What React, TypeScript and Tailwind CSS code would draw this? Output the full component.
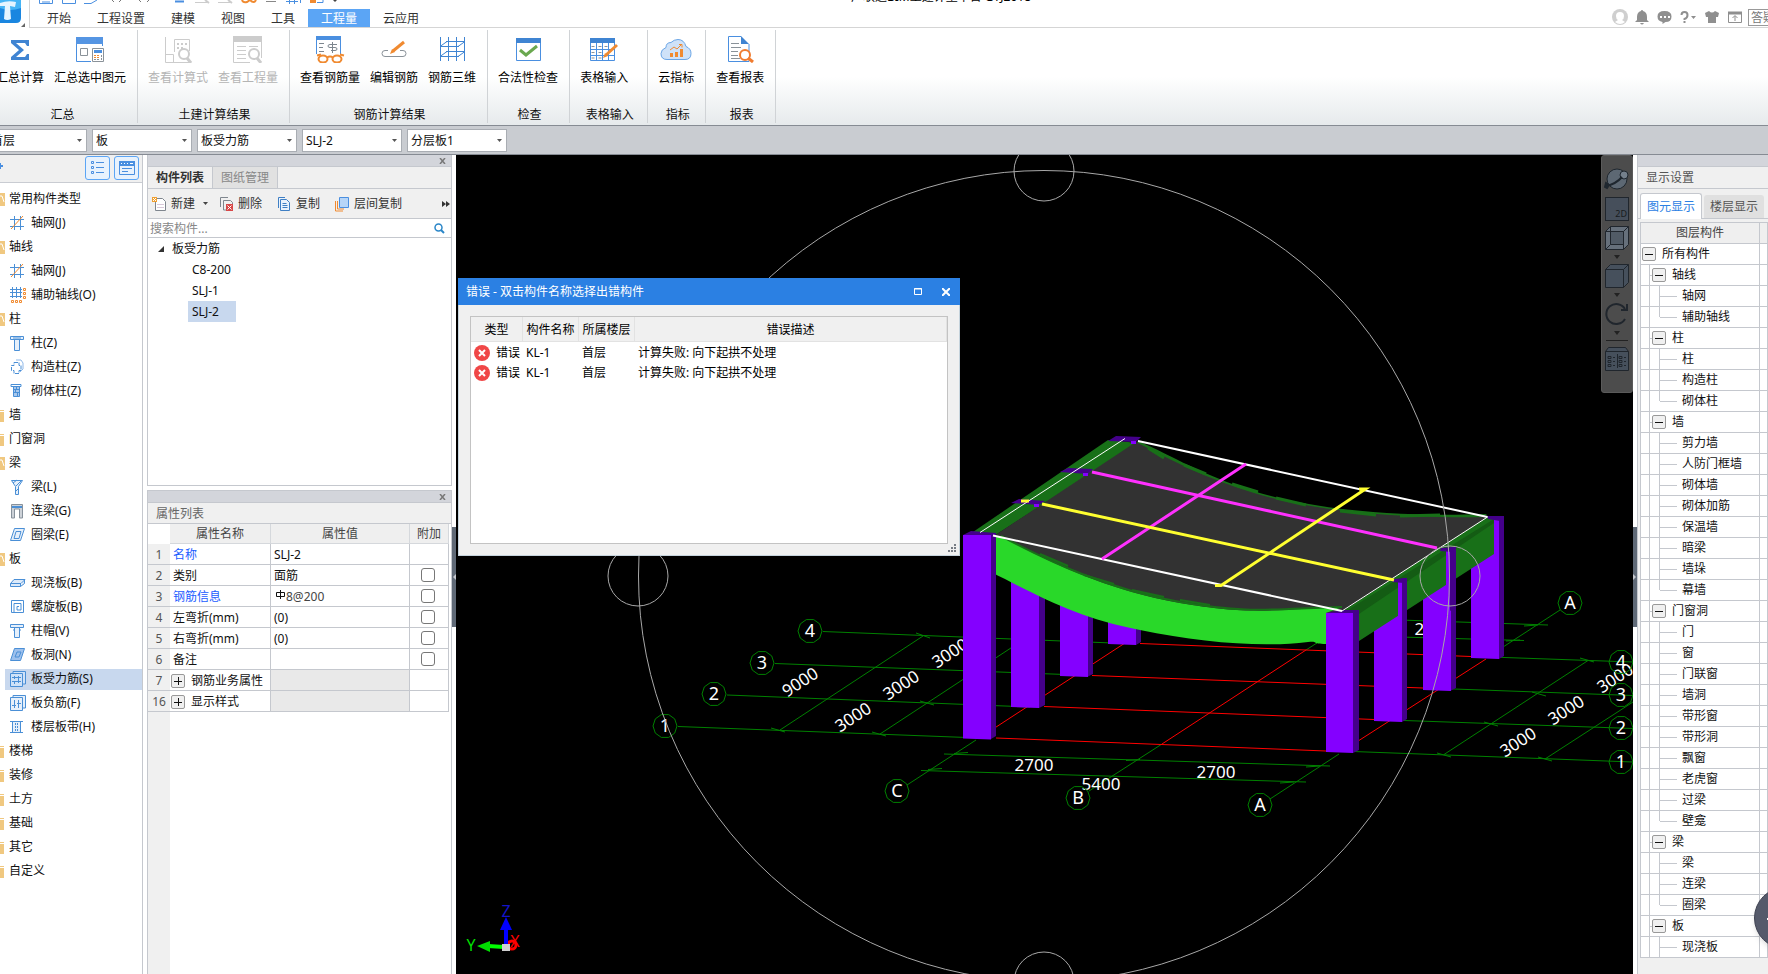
import React, { useState } from "react";

type IconProps = { name: string };

const BLUE = "#4a8fe0";
const ORANGE = "#f08a30";

// 32x28 icons of the ribbon
function RibbonIcon({ name }: IconProps) {
  return (
    <svg width="32" height="28" viewBox="0 0 32 28" fill="none" className="shrink-0">
      {name === "sum" && (
        <path d="M7 5h18v6h-2l-2-3h-9l8 7-8 7h9l2-3h2v6H7v-3l8-7-8-7z" fill="#3f84d2" />
      )}
      {name === "sumSel" && (
        <>
          <path d="M2.500 2v24.500H17M28.500 2v9" stroke={BLUE} />
          <path d="M2 2h27v7H2z" fill="#5595e3" />
          <path d="M6.500 13.500h7v7h-7z" stroke="#8a9299" />
          <path d="M18.500 13.500h11v13h-11z" stroke="#8a9299" fill="#fff" />
          <path d="M20 15h8v3h-8z" fill={BLUE} />
          <path d="M20 20h2v1h-2zM23 20h2v1h-2zM20 22h2v1h-2zM23 22h2v1h-2z" fill={ORANGE} />
          <path d="M27 20h1v2h-1zM27 23h1v2h-1zM20 24h2v1h-2zM23 24h2v1h-2z" fill="#8a9299" />
        </>
      )}
      {name === "formula" && (
        <>
          <path d="M3.500 2v25.500H29M3.500 19.500h8v8M12.500 17V4.500h15V16" stroke="#ccc" />
          <path d="M15 8h2v2h-2zM19 8h2v2h-2zM23 8h2v2h-2zM15 12h2v2h-2zM19 12h2v2h-2z" fill="#ccc" />
          <circle cx="22" cy="19" r="5" stroke="#ccc" strokeWidth="2" fill="#fff" />
          <path d="M25 23l4 5" stroke="#ccc" strokeWidth="3" />
        </>
      )}
      {name === "quantity" && (
        <>
          <path d="M1.500 2v25.500H18M29.500 2v21" stroke="#ccc" />
          <path d="M1 1h29v6H1z" fill="#ccc" />
          <path d="M5 11.500h9M5 15.500h9M5 19.500h9M5 23.500h9M17 11.500h9" stroke="#ccc" />
          <circle cx="22" cy="19" r="5" stroke="#ccc" strokeWidth="2" fill="#fff" />
          <path d="M25 23l4 5" stroke="#ccc" strokeWidth="3" />
        </>
      )}
      {name === "rebar" && (
        <>
          <path d="M2.500 2v17M26.500 2v17" stroke={BLUE} />
          <path d="M2 1h25v4H2z" fill={BLUE} />
          <path d="M5 8.500h5M5 12.500h4M5 16.500h5" stroke="#7d868e" />
          <path d="M18.500 7v11M23 9.500h-7q-2 0-2 1.500t2 1.500h5q2 0 2 1.500t-2 1.500h-4" stroke="#7d868e" />
          <path d="M3 20.500l4-1M30 20.500l-4-1M13 22.500q3-2 6 0" stroke={ORANGE} strokeWidth="2" />
          <ellipse cx="9" cy="24" rx="4.500" ry="3.500" stroke={ORANGE} strokeWidth="2" fill="#fff" />
          <ellipse cx="23" cy="24" rx="4.500" ry="3.500" stroke={ORANGE} strokeWidth="2" fill="#fff" />
        </>
      )}
      {name === "edit" && (
        <>
          <path d="M10 15.500H7q-3 0-3 3t3 3h18q3 0 3-3t-3-3h-3" stroke="#8a9299" />
          <path d="M12 19l2-5 3 3z" fill={ORANGE} />
          <path d="M15 16L26 7" stroke={ORANGE} strokeWidth="3" />
        </>
      )}
      {name === "rebar3d" && (
        <path
          d="M4.500 2v24M12.500 2v24M20.500 2v24M28.500 2v24M10 6.500h19M4 11.500h19M10 16.500h19M4 21.500h19M4 11.500l7-5M4 21.500l7-5M22 11.500l7-5M22 21.500l7-5"
          stroke="#3f84d2"
        />
      )}
      {name === "check" && (
        <>
          <path d="M4.500 3.500h24v22h-24z" stroke={BLUE} />
          <path d="M4 3h25v5H4z" fill="#3f84d2" />
          <path d="M8 15l6 5 11-9" stroke="#6aa84f" strokeWidth="3" />
        </>
      )}
      {name === "table" && (
        <>
          <path d="M2.500 3.500h24v22h-24z" stroke={BLUE} />
          <path d="M2 3h25v5H2z" fill="#3f84d2" />
          <path d="M2 14.500h24M2 20.500h24M8.500 8v17M14.500 8v17M20.500 8v17" stroke={BLUE} />
          <path d="M3.500 11.500h3M10.500 11.500h3M16.500 11.500h3M3.500 17.500h3M10.500 17.500h3M3.500 23h3M10.500 23h3" stroke="#8a9299" />
          <path d="M15 23l2-5 3 3z" fill={ORANGE} />
          <path d="M18 20L29 10" stroke={ORANGE} strokeWidth="3" />
        </>
      )}
      {name === "cloud" && (
        <>
          <path
            d="M7 24.500q-6 0-6-6 0-4 5-6 0-5 5-5 3-3 7-3 6 0 8 7 5 2 5 7 0 6-6 6z"
            fill="#cfe2f8"
            stroke="#6aa5e6"
          />
          <path d="M10 18h3v4h-3zM15 17h3v5h-3zM20 14h3v8h-3z" fill={ORANGE} />
          <path d="M10 15l4-3 3 2 5-5M19 9.500h3v3" stroke={ORANGE} />
        </>
      )}
      {name === "report" && (
        <>
          <path d="M17 1.500H4.500v25H25V9" stroke={BLUE} fill="#fff" />
          <path d="M17 1v8h8z" fill="#3f84d2" />
          <path d="M7 8.500h8M7 12.500h10M7 16.500h7M7 20.500h7M7 23.500h9" stroke="#8a9299" />
          <circle cx="21" cy="20" r="5" stroke="#f07c30" strokeWidth="2" fill="#fff" />
          <path d="M24 23l5 4" stroke="#f07c30" strokeWidth="3" />
        </>
      )}
    </svg>
  );
}

// 16x16 icons of the component tree
function TreeIcon({ name }: IconProps) {
  const s = "#4a8fd6";
  return (
    <svg width="16" height="16" viewBox="0 0 16 16" fill="none" stroke={s} className="shrink-0">
      {name === "grid" && (
        <>
          <path d="M4.500 1v14M10.500 1v14M0 4.500h14M0 11.500h14" />
          <path d="M1 14L13 1" stroke={ORANGE} />
        </>
      )}
      {name === "gridAux" && (
        <>
          <path d="M2.500 0v11M6.500 0v11M10.500 0v11M0 2.500h12M0 5.500h12M0 9.500h12" />
          <path d="M13.500 1.500h2v2h-2zM13.500 5.500h2v2h-2zM13.500 9.500h2v2h-2zM1.500 13.500h2v2h-2zM5.500 13.500h2v2h-2zM9.500 13.500h2v2h-2z" stroke={ORANGE} />
        </>
      )}
      {name === "column" && <path d="M.5 1.500h13v3h-13zM4.500 4.500v11h5v-11M3 3h8" fill="#e6f0fb" />}
      {name === "cap" && <path d="M.5 1.500h13v3h-13zM4.500 5v9.500h5V5M3 7h1M10 7h1" fill="#e6f0fb" />}
      {name === "structCol" && (
        <>
          <path d="M6 1h5l2 3v6l-3 3" stroke="#8fb8e8" />
          <path d="M4 3.500h5v3h2v5H9v3H4v-3H1.500v-5H4z" fill="#fff" strokeDasharray="4 1" />
        </>
      )}
      {name === "brickCol" && (
        <>
          <path d="M1 1.500h10v2H1z" />
          <path d="M3.500 3.500h6v10h-6zM3 6.500h6M3 9.500h6M6.500 4v2M5.500 7v2M7.500 10v3" fill="#a9c8ec" />
        </>
      )}
      {name === "beam" && <path d="M1.500 1.500h11l-4 6v8h-3v-8zM3 4l4-3M6 7l5-5M6 12l3-3" fill="#e6f0fb" />}
      {name === "linkBeam" && (
        <>
          <path d="M1.500 15V1.500h11V15h-3V6h-5v9z" stroke="#87919b" fill="#cdd2d8" />
          <path d="M2 4h10" strokeWidth="2" />
        </>
      )}
      {name === "ringBeam" && <path d="M4.500 1.500h10l-4 12H.5zM6 4.500h5l-2 7H4z" fill="#e6f0fb" />}
      {name === "slab" && <path d="M4 4.500h11l-4 4H.5zM.5 8.500v3h10v-3M10.500 11.500l4-3v-4" fill="#dceafa" />}
      {name === "spiral" && <path d="M1.500 1.500h12v12h-12zM4 13V4.500h7v6.500H7V7.500h2" />}
      {name === "hole" && <path d="M4.500 1.500h10l-4 12H.5zM7 5h4l-2 5H5z" fill="#9dc0ec" />}
      {name === "rebarS" && <path d="M3 3V.5h12.500V13H13M.5 2.500h12v13H.5zM2 6.500h9M2 10.500h9M4.500 5v3M8.500 5v7M4.500 10v3" fill="#cfe2f8" />}
      {name === "rebarF" && <path d="M3 3V.5h12.500V13H13M.5 2.500h12v13H.5zM4.500 5v8M8.500 5v8M2 10.500h4M7 8.500h4" fill="#e6f0fb" />}
      {name === "band" && (
        <>
          <path d="M2 3h9v10H2z" fill="#e6f0fb" stroke="none" />
          <path d="M0 2.500h13M0 13.500h13M2.500 3v10M10.500 3v10" />
          <path d="M5.500 4v9M7.500 4v9" strokeDasharray="2 1" />
        </>
      )}
    </svg>
  );
}

const tabs = ["开始", "工程设置", "建模", "视图", "工具", "工程量", "云应用"];

const ribbon = [
  { title: "汇总", buttons: [["sum", "汇总计算"], ["sumSel", "汇总选中图元"]] },
  { title: "土建计算结果", disabled: true, buttons: [["formula", "查看计算式"], ["quantity", "查看工程量"]] },
  { title: "钢筋计算结果", buttons: [["rebar", "查看钢筋量"], ["edit", "编辑钢筋"], ["rebar3d", "钢筋三维"]] },
  { title: "检查", buttons: [["check", "合法性检查"]] },
  { title: "表格输入", wide: true, buttons: [["table", "表格输入"]] },
  { title: "指标", buttons: [["cloud", "云指标"]] },
  { title: "报表", buttons: [["report", "查看报表"]] },
];

const selects = [
  ["楼层", "首层"],
  ["构件大类", "板"],
  ["构件类型", "板受力筋"],
  ["构件", "SLJ-2"],
  ["分层", "分层板1"],
];

// [label, icon]; groups use "open" or "closed"
const navItems = [
  ["常用构件类型", "open"],
  ["轴网(J)", "grid"],
  ["轴线", "open"],
  ["轴网(J)", "grid"],
  ["辅助轴线(O)", "gridAux"],
  ["柱", "open"],
  ["柱(Z)", "column"],
  ["构造柱(Z)", "structCol"],
  ["砌体柱(Z)", "brickCol"],
  ["墙", "closed"],
  ["门窗洞", "closed"],
  ["梁", "open"],
  ["梁(L)", "beam"],
  ["连梁(G)", "linkBeam"],
  ["圈梁(E)", "ringBeam"],
  ["板", "open"],
  ["现浇板(B)", "slab"],
  ["螺旋板(B)", "spiral"],
  ["柱帽(V)", "cap"],
  ["板洞(N)", "hole"],
  ["板受力筋(S)", "rebarS"],
  ["板负筋(F)", "rebarF"],
  ["楼层板带(H)", "band"],
  ["楼梯", "closed"],
  ["装修", "closed"],
  ["土方", "closed"],
  ["基础", "closed"],
  ["其它", "closed"],
  ["自定义", "closed"],
];

const properties = [
  { no: 1, name: "名称", value: "SLJ-2", link: true },
  { no: 2, name: "类别", value: "面筋", check: true },
  { no: 3, name: "钢筋信息", value: "8@200", link: true, check: true, grade: true },
  { no: 4, name: "左弯折(mm)", value: "(0)", check: true },
  { no: 5, name: "右弯折(mm)", value: "(0)", check: true },
  { no: 6, name: "备注", value: "", check: true },
  { no: 7, name: "钢筋业务属性", value: "", group: true },
  { no: 16, name: "显示样式", value: "", group: true },
];

const layers = [
  { name: "轴线", items: ["轴网", "辅助轴线"] },
  { name: "柱", items: ["柱", "构造柱", "砌体柱"] },
  { name: "墙", items: ["剪力墙", "人防门框墙", "砌体墙", "砌体加筋", "保温墙", "暗梁", "墙垛", "幕墙"] },
  { name: "门窗洞", items: ["门", "窗", "门联窗", "墙洞", "带形窗", "带形洞", "飘窗", "老虎窗", "过梁", "壁龛"] },
  { name: "梁", items: ["梁", "连梁", "圈梁"] },
  { name: "板", items: ["现浇板"], more: true },
];

function TitleBar() {
  return (
    <div className="relative flex h-[9px] items-start overflow-hidden pl-[39px]">
      <svg width="310" height="4" viewBox="0 0 310 4" fill="none">
        <path d="M.5 0v3.500h13V0M3 2h8M23.500 0v3.500h13V0M45 3.500h7l6-3.500" stroke={BLUE} />
        <path d="M73 0l2 2M82 0l-2 2M100 0l2 2M110 0l-2 2" stroke="#777" />
        <path d="M136 1.500h9" stroke={BLUE} strokeWidth="2" />
        <path d="M156 2.500h12M179 2.500h12" stroke="#ccc" />
        <path d="M166 0l4 3M189 0l4 3" stroke="#ccc" strokeWidth="2" />
        <path d="M203 0q1 3 5 2l3-2q4 4 6 0" stroke={ORANGE} strokeWidth="2" />
        <path d="M227 1.500h10" stroke="#888" />
        <path d="M247 1.500h12M250.500 0v4M255.500 0v4M261.500 0v3" stroke={BLUE} />
        <path d="M271 0h6v3h-6z" fill={ORANGE} />
        <path d="M278 2.500h6V0" stroke={BLUE} />
        <path d="M294 0h4l-2 2z" fill="#444" />
      </svg>
      <span className="absolute top-[-11px] left-[851px] leading-4 whitespace-nowrap text-black">
        广联达BIM土建计量平台 GTJ2018
      </span>
    </div>
  );
}

function TabBar() {
  const [active, setActive] = useState("工程量");
  return (
    <div className="flex h-[19px] border-b border-[#d5d5d5] pl-[34px]">
      {tabs.map((t) => (
        <button
          key={t}
          onClick={() => setActive(t)}
          className={`h-[18px] px-[13px] pt-px leading-4 ${active === t ? "bg-[#5ba5f5] text-white" : "text-[#333]"}`}
        >
          {t}
        </button>
      ))}
      <div className="ml-auto flex items-start text-[#8f8f8f]">
        <button aria-label="用户" className="mr-[7px]">
          <svg width="16" height="16" viewBox="0 0 16 16">
            <circle cx="8" cy="8" r="8" fill="#cfcfcf" />
            <path d="M8 3q4 0 4 4 0 3-2 4l3 2q-5 4-10 0l3-2Q4 10 4 7q0-4 4-4z" fill="#fff" />
          </svg>
        </button>
        <button aria-label="通知" className="mr-2">
          <svg width="14" height="16" viewBox="0 0 14 16" fill="currentColor">
            <path d="M7 1q1 0 1 1 4 1 4 6v3l2 2H0l2-2V8q0-5 4-6 0-1 1-1zM5 14h4q-2 3-4 0z" />
          </svg>
        </button>
        <button aria-label="消息" className="mr-2">
          <svg width="15" height="16" viewBox="0 0 15 16" fill="currentColor">
            <path d="M7.500 2q7 0 7 5.500t-6 5.500l-3 2v-2Q.5 12 .5 7.500.5 2 7.500 2z" />
            <path d="M3 7h2v2H3zM7 7h2v2H7zM11 7h2v2h-2z" fill="#fff" />
          </svg>
        </button>
        <button aria-label="帮助" className="mr-2">
          <svg width="17" height="16" viewBox="0 0 17 16" fill="none">
            <path d="M1.500 6q0-3 3-3t3 3-3 4v1" stroke="currentColor" strokeWidth="2" />
            <path d="M3.500 12h2v2h-2zM11 7h5l-2.500 3z" fill="currentColor" />
          </svg>
        </button>
        <button aria-label="皮肤" className="mr-[9px]">
          <svg width="14" height="16" viewBox="0 0 14 16" fill="currentColor">
            <path d="M4 2q3 3 6 0l4 2-1 4h-2v6H3V8H1L0 4z" />
          </svg>
        </button>
        <button aria-label="收起功能区" className="mr-1.5">
          <svg width="14" height="16" viewBox="0 0 14 16" fill="none" stroke="currentColor">
            <path d="M.5 3.500h13v10H.5zM7 12V7M4.500 9L7 6.500 9.500 9" />
            <path d="M0 4h14" strokeWidth="3" />
          </svg>
        </button>
        <button className="h-[17px] w-5 overflow-hidden border border-r-0 border-[#999] pl-0.5 text-left leading-4 whitespace-nowrap text-[#777]">
          答疑
        </button>
      </div>
    </div>
  );
}

function Ribbon() {
  return (
    <div className="flex h-[98px] border-b border-[#868b93] bg-linear-to-b from-white from-50% to-[#e6eaec] pt-0.5 pb-0.5">
      {ribbon.map((g, i) => (
        <div
          key={g.title}
          className={`flex shrink-0 flex-col justify-between border-r border-[#d0d3d6] pl-[5px] ${i === 0 ? "-ml-[14px]" : ""} ${g.wide ? "pr-[14px]" : "pr-1.5"}`}
        >
          <div className="flex">
            {g.buttons.map(([icon, label]) => (
              <button
                key={label}
                disabled={g.disabled}
                className={`flex flex-col items-center gap-1.5 px-[5px] pt-[5px] leading-[18px] whitespace-nowrap ${g.disabled ? "text-[#b4b4b4]" : "text-black"}`}
              >
                <RibbonIcon name={icon} />
                {label}
              </button>
            ))}
          </div>
          <div className={`pl-[3px] text-center leading-4 text-[#111] ${g.wide ? "-mr-2" : ""}`}>{g.title}</div>
        </div>
      ))}
    </div>
  );
}

function SelectBar() {
  return (
    <div className="flex h-[29px] items-center gap-[5px] border-b border-[#868b93] bg-[#c9ccd1]">
      {selects.map(([label, value], i) => (
        <div key={label} className={`relative h-[23px] w-[100px] ${i === 0 ? "-ml-[13px]" : ""}`}>
          <select
            aria-label={label}
            className="h-full w-full appearance-none border border-[#a9adb3] bg-white pt-px pl-[3px] text-[#111]"
          >
            <option>{value}</option>
          </select>
          <svg width="5" height="3" className="pointer-events-none absolute top-[10px] right-[5px]">
            <path d="M0 0h5L2.500 3z" fill="#555" />
          </svg>
        </div>
      ))}
    </div>
  );
}

function Sidebar() {
  const [selected, setSelected] = useState(20);
  return (
    <aside className="w-[143px] shrink-0 border-r border-[#c5c8ce]">
      <div className="flex h-7 items-start border-b border-[#c9ccd2] bg-[#f0f0f0] pt-px">
        <svg width="4" height="22" className="mr-auto">
          <path d="M0 10h3M0 7v6" stroke={BLUE} strokeWidth="2" />
        </svg>
        <button aria-label="列表视图" className="mr-1 flex h-6 w-[25px] items-center justify-center rounded-[3px] border border-[#5ba5f5] bg-[#e8f2fd]">
          <svg width="14" height="14" viewBox="0 0 14 14" fill="none" stroke={BLUE}>
            <path d="M.5.500h2v2h-2zM.5 5.500h2v2h-2zM.5 10.500h2v2h-2zM5 1.500h8M5 6.500h8M5 11.500h8" />
          </svg>
        </button>
        <button aria-label="面板视图" className="mr-[3px] flex h-6 w-[25px] items-center justify-center rounded-[3px] border border-[#5ba5f5] bg-[#e8f2fd]">
          <svg width="16" height="14" viewBox="0 0 16 14" fill="none">
            <path d="M.5.500h15v13H.5zM3 7.500h10M3 10.500h6" stroke={BLUE} />
            <path d="M0 0h16v5H0z" fill={BLUE} />
            <path d="M2 2.500h1M5 2.500h1M8 2.500h1M11 2.500h3" stroke="#fff" />
          </svg>
        </button>
      </div>
      <ul className="pt-1">
        {navItems.map(([label, icon], i) => {
          const isGroup = icon === "open" || icon === "closed";
          return (
            <li key={i} className="flex h-6 items-center">
              {isGroup ? (
                <button className="flex items-center gap-1 leading-5 text-[#111]">
                  <svg width="5" height="13" viewBox="0 0 5 13">
                    <path d={icon === "open" ? "M0 0h5v13H0z" : "M0 1h4v12H0z"} fill="#f0c880" />
                    <path d={icon === "open" ? "M0 3h2l2 6" : "M0 2.500h4"} stroke="#fff" fill="none" />
                  </svg>
                  {label}
                </button>
              ) : (
                <button
                  onClick={() => setSelected(i)}
                  className={`ml-[5px] flex h-[21px] flex-1 items-center gap-[5px] pl-[5px] leading-5 text-[#111] ${selected === i ? "bg-[#c8d8ee]" : ""}`}
                >
                  <TreeIcon name={icon} />
                  {label}
                </button>
              )}
            </li>
          );
        })}
      </ul>
    </aside>
  );
}

function PanelGrip() {
  return (
    <div className="flex h-3 items-center justify-end border-b border-[#c5c8ce] bg-[#d3d5db] pr-[5px]">
      <button aria-label="关闭面板">
        <svg width="7" height="6" viewBox="0 0 7 6" className="block">
          <path d="M1 0l5 6M6 0L1 6" stroke="#777" strokeWidth="1.500" />
        </svg>
      </button>
    </div>
  );
}

function ComponentList() {
  return (
    <section className="flex h-[331px] shrink-0 flex-col border-x border-b border-[#c5c8ce]">
      <PanelGrip />
      <div className="flex h-[22px] border-b border-[#c5c8ce] bg-[#f0f0f0]">
        <button className="border-r border-[#c5c8ce] px-2 font-bold text-[#333]">构件列表</button>
        <button className="border-r border-[#c5c8ce] bg-[#e1e1e1] px-2 text-[#888]">图纸管理</button>
      </div>
      <div className="flex h-[30px] items-center border-b border-[#c5c8ce] bg-[#f0f0f0] pl-1 text-[#333]">
        <button className="flex items-center gap-1">
          <svg width="15" height="16" viewBox="0 0 15 16" fill="none">
            <path d="M3.500 2.500h7l3 3v9h-10z" stroke="#7f868e" fill="#fff" />
            <path d="M5 8.500h7M5 11.500h7" stroke="#d8c8d8" />
            <path d="M0 1h5v5H0z" fill="#f0a030" />
            <path d="M1 2l3 3M4 2L1 5" stroke="#fff" />
          </svg>
          新建
        </button>
        <svg width="5" height="3" className="mr-[11px] ml-2">
          <path d="M0 0h5L2.500 3z" fill="#444" />
        </svg>
        <button className="mr-4 flex items-center gap-1">
          <svg width="15" height="16" viewBox="0 0 15 16" fill="none">
            <path d="M1.500 11V1.500H9M4.500 14V4.500h7l2 2v7.500z" stroke="#7f868e" />
            <path d="M7 8h7v7H7z" fill="#d84848" />
            <path d="M8.500 9.500l4 4M12.500 9.500l-4 4" stroke="#fff" />
          </svg>
          删除
        </button>
        <button className="mr-[15px] flex items-center gap-1.5">
          <svg width="12" height="16" viewBox="0 0 12 16" fill="none" stroke="#3f7fc4">
            <path d="M.5 12V1.500H7M2.500 3.500h6l3 3v8h-9z" fill="#eaf3fd" />
            <path d="M4.500 7.500h4M4.500 9.500h5M4.500 11.500h5" />
          </svg>
          复制
        </button>
        <button className="flex items-center gap-1">
          <svg width="15" height="16" viewBox="0 0 15 16" fill="none">
            <path d="M.5 5v10H8M2.500 5v8H9" stroke={ORANGE} />
            <path d="M4.500 1.500h9v10h-9z" fill="#b7d5f7" stroke={BLUE} />
          </svg>
          层间复制
        </button>
        <button aria-label="更多" className="mr-px ml-auto">
          <svg width="8" height="6" viewBox="0 0 8 6">
            <path d="M0 0l4 3-4 3zM4 0l4 3-4 3z" fill="#333" />
          </svg>
        </button>
      </div>
      <div className="flex h-[19px] items-center border-b border-[#c5c8ce] pr-1.5">
        <input
          aria-label="搜索构件"
          placeholder="搜索构件..."
          className="min-w-0 flex-1 pt-px pl-0.5 outline-none placeholder:text-[#888]"
        />
        <svg width="11" height="11" viewBox="0 0 11 11" fill="none" stroke="#2a86c8">
          <circle cx="4.500" cy="4.500" r="3.500" strokeWidth="1.500" />
          <path d="M7 7l3 3" strokeWidth="2" />
        </svg>
      </div>
      <div className="flex flex-col items-start text-[#111]">
        <button className="flex h-[21px] items-center gap-2 pl-2.5">
          <svg width="6" height="6">
            <path d="M6 0v6H0z" fill="#333" />
          </svg>
          板受力筋
        </button>
        <button className="ml-10 h-[21px] w-12 pl-1 text-left">C8-200</button>
        <button className="ml-10 h-[21px] w-12 pl-1 text-left">SLJ-1</button>
        <button className="ml-10 h-[21px] w-12 bg-[#c8d8ee] pl-1 text-left">SLJ-2</button>
      </div>
    </section>
  );
}

function PropertyList() {
  return (
    <section className="mt-1 flex flex-1 flex-col border-x border-t border-[#c5c8ce]">
      <PanelGrip />
      <h2 className="h-[21px] border-b border-[#c5c8ce] bg-[#f0f0f0] pl-2 leading-[22px] text-[#666]">属性列表</h2>
      <table className="w-[301px] table-fixed border-separate border-spacing-0 text-[#111]">
        <colgroup>
          <col className="w-[22px]" />
          <col className="w-[101px]" />
          <col className="w-[139px]" />
          <col className="w-[39px]" />
        </colgroup>
        <thead>
          <tr className="text-[#444]">
            <td className="h-5" />
            <th className="h-5 border-r border-b border-[#d5d8dc] bg-[#efefef] p-0 pt-px leading-4 font-normal">属性名称</th>
            <th className="h-5 border-r border-b border-[#d5d8dc] bg-[#efefef] p-0 pt-px leading-4 font-normal">属性值</th>
            <th className="h-5 border-r border-b border-[#d5d8dc] bg-[#efefef] p-0 pt-px leading-4 font-normal">附加</th>
          </tr>
        </thead>
        <tbody>
          {properties.map((p) => (
            <tr key={p.no}>
              <td className="h-[21px] border-b border-[#c5c8ce] bg-[#f0f0f0] p-0 pt-px text-center leading-4 text-[#555]">{p.no}</td>
              <td className={`h-[21px] border-r border-b border-[#c5c8ce] p-0 pt-px leading-4 whitespace-nowrap ${p.link ? "text-[#1a5cff]" : ""}`}>
                {p.group ? (
                  <div className="flex items-center gap-1.5 pl-px">
                    <button aria-label={`展开${p.name}`} className="flex h-[14px] w-[14px] items-center justify-center rounded-[2px] border border-[#999] bg-[#f0f0f0]">
                      <svg width="8" height="8">
                        <path d="M0 4.500h8M4.500 0v8" stroke="#111" />
                      </svg>
                    </button>
                    {p.name}
                  </div>
                ) : (
                  <span className="pl-[3px]">{p.name}</span>
                )}
              </td>
              <td className={`h-[21px] border-r border-b border-[#c5c8ce] p-0 pt-px pl-[3px] leading-4 ${p.group ? "bg-[#e9e9e9]" : ""}`}>
                {p.grade ? (
                  <span className="flex items-center pl-0.5 text-[#444]">
                    <svg width="9" height="10" viewBox="0 0 9 10" fill="none" stroke="#111" className="mr-px mb-1">
                      <path d="M.5 2.500h8v4h-8zM4.500 0v9" />
                    </svg>
                    {p.value}
                  </span>
                ) : (
                  p.value
                )}
              </td>
              <td className="h-[21px] border-r border-b border-[#c5c8ce] p-0">
                {p.check && (
                  <input
                    type="checkbox"
                    aria-label={`附加${p.name}`}
                    className="mr-auto ml-[11px] block h-[14px] w-[14px] appearance-none rounded-[3px] border border-[#777] bg-white"
                  />
                )}
              </td>
            </tr>
          ))}
        </tbody>
      </table>
      <div className="w-[22px] flex-1 bg-[#f0f0f0]" />
    </section>
  );
}

function Splitter({ side }: { side: "left" | "right" }) {
  return (
    <div className="flex w-1 shrink-0 flex-col bg-white pt-[372px]">
      <button aria-label={side === "left" ? "折叠左侧" : "折叠右侧"} className="flex h-[100px] items-center bg-[#5f6976]">
        <svg width="4" height="6">
          <path d={side === "left" ? "M4 0v6L1 3z" : "M0 0v6l3-3z"} fill="#c5c8ce" />
        </svg>
      </button>
    </div>
  );
}

// Ten sided grid bubble with its axis number
function Bubble({ x, y, label }: { x: number; y: number; label: string }) {
  const points = Array.from({ length: 10 }, (_, i) => {
    const a = (i * Math.PI) / 5;
    return `${(x + 12 * Math.cos(a)).toFixed(1)},${(y + 12 * Math.sin(a)).toFixed(1)}`;
  }).join(" ");
  return (
    <>
      <polygon points={points} fill="none" stroke="#008000" />
      <text x={x} y={y + 6} fill="#fff" textAnchor="middle">
        {label}
      </text>
    </>
  );
}

const bubbles: [number, number, string][] = [
  [810, 631, "4"],
  [762, 663, "3"],
  [714, 694, "2"],
  [665, 726, "1"],
  [1621, 662, "4"],
  [1621, 695, "3"],
  [1621, 728, "2"],
  [1621, 762, "1"],
  [897, 791, "C"],
  [1078, 798, "B"],
  [1260, 805, "A"],
  [1570, 603, "A"],
];

const slantedDims: [number, number, string][] = [
  [800, 682, "9000"],
  [853, 717, "3000"],
  [901, 685, "3000"],
  [950, 653, "3000"],
  [1518, 742, "3000"],
  [1566, 710, "3000"],
  [1615, 678, "3000"],
];

function Scene() {
  return (
    <svg
      viewBox="456 155 1177 819"
      preserveAspectRatio="xMidYMid slice"
      className="absolute inset-0 h-full w-full"
      fontSize="18"
      fill="none"
    >
      {/* axis grid */}
      <g stroke="#008000">
        <path d="M823 631.500L1125 643.500M775 663.500L1078 675M727 695L1030 707M678 726.500L980 738" />
        <path d="M1490 657L1633 662M1440 688.500L1633 695.500M1390 720L1633 728.500M1340 751L1633 762" />
        <path d="M780 730L923 636M880 734L1020 642M1444 754.500L1588 660.500M1545 759L1633 702" />
        <path d="M907 785L976 740M1089 791L1162 744M1306 650L1320 641M1270 799L1339 754M1560 610L1500 649" />
        <path d="M944 754L1330 766M921 770.500L1306 782M1400 620L1548 625M1400 637L1524 640.500" />
        <path d="M916 633l14 5M771 728l14 4M872 732l14 4M920 701l14 4M954 753.500l14-1M928 769.500l14-1M1126 760.500l14-1M1306 767l14-1M1280 783l14-1" />
        <path d="M1580 658l14 4M1532 692l14 4M1484 722l14 4M1437 753l14 4M1538 757l14 4M1524 626l14-1M1506 641l14-1" />
      </g>
      <path
        d="M996 738L1326 751M1044 706.500L1374 719.500M1092 675.500L1423 688M1140 643.500L1471 656.500M990 731L1125 643M1162 744L1306 650M1355 743L1486 659"
        stroke="#f00"
      />

      <g fill="#fff" textAnchor="middle" fontSize="17">
        {slantedDims.map(([x, y, label]) => (
          <text key={`${x}-${y}`} x={x} y={y + 6} transform={`rotate(-33 ${x} ${y})`}>
            {label}
          </text>
        ))}
        <text x="1034" y="771">2700</text>
        <text x="1216" y="778">2700</text>
        <text x="1101" y="790">5400</text>
        <text x="1434" y="635">2700</text>
      </g>
      {bubbles.map(([x, y, label]) => (
        <Bubble key={`${x}-${y}`} x={x} y={y} label={label} />
      ))}

      {/* rear columns */}
      <g fill="#44008a">
        <path d="M1039 550h6v155l-6 3zM1087 580h6v94l-6 3zM1136 600h5v42l-5 3z" />
        <path d="M1402 578h5v141l-5 3zM1450 547h6v141l-6 3zM1499 516h5v140l-5 3z" />
      </g>
      <g fill="#8400ff">
        <path d="M1011 540h28v168l-28-1zM1060 570h28v107l-28-1zM1108 600h28v45l-28-1z" />
        <path d="M1374 600h28v122l-28-1zM1423 570h28v121l-28-1zM1471 540h28v119l-28-1z" />
      </g>

      {/* slab and beams */}
      <path d="M1343 611L1487 517l12 2-5 35L1359 641v-30z" fill="#187018" />
      <path d="M1343 613L1494 519v4L1359 614z" fill="#145c14" />
      <path d="M973 532L1108 440l30 3L994 536z" fill="#187018" />
      <path d="M1138 441C1175 457 1200 474 1250 490S1380 518 1487 514l-5 4C1390 521 1310 512 1250 497S1170 461 1136 445z" fill="#187018" />
      <path
        d="M1136 442C1170 460 1210 480 1254 493S1370 519 1487 517L1342 611 1326 616C1270 620 1200 612 1140 600S1035 568 994 536z"
        fill="#323232"
      />
      <path
        d="M991 537L1003 537C1050 563 1110 591 1180 603S1270 610 1342 607l-16 6v31C1309 644 1320 641 1308 642 1260 648 1200 642 1140 630S1050 602 991 572z"
        fill="#29d829"
      />
      <path d="M1001 536C1050 562 1110 590 1180 602S1270 609 1342 607" stroke="#187018" strokeWidth="2" />
      <path d="M1040 554l28 12M1084 575l30 9M1132 590l32 7M1180 600l30 5" stroke="#187018" strokeWidth="2" />
      <path d="M1148 448l16 10M1184 465l22 9M1232 484l26 8M1276 498l30 7M1340 511l36 4M1400 516l40-1" stroke="#187018" strokeWidth="3" />

      {/* right row of columns passing the side beam */}
      <g fill="#8400ff">
        <path d="M1398 582h4v35l-4 2zM1446 551h4v35l-4 2zM1494 519h5v35l-5 2z" />
      </g>
      <g fill="#44008a">
        <path d="M1402 578h5v60l-5 4zM1450 547h6v60l-6 4zM1499 516h5v60l-5 4z" />
        <path d="M1393 579l14-1-3 5-12-1zM1441 548l15-1-4 5-12-1zM1487 516l17 0-4 5-12-2z" />
        <path d="M991 535l5-2v203l-5 3zM963 535l8-4 25 2-5 3z" />
        <path d="M1011 503l8-4 26 2-6 4zM1060 472l8-4 25 1-5 5zM1108 441l8-5 25 1-5 5z" />
        <path d="M1326 613l17-3h16v140l-6 3V613z" />
      </g>
      <path d="M963 535h28v204.500l-28-1zM1326 613h27v140l-27-1z" fill="#8400ff" />
      <path d="M1034 504h5v3h-5zM1083 473h5v3h-5zM1131 441h5v3h-5z" fill="#8400ff" />

      <path d="M1138 441L1487.500 517M993 535.500L1342 611" stroke="#fff" strokeWidth="2" />
      <path d="M980 532.500L1125 438.500M1342 611L1487.500 517" stroke="#fff" />
      <path d="M1246 464L1102 559M1092 472L1437 548" stroke="#ff30ff" strokeWidth="3" />
      <path d="M1359 489h6.500L1221 585.500h-6M1042 504L1380 577l14 3M1021 501h8" stroke="#ffff30" strokeWidth="3" />

      {/* orbit handle */}
      <g stroke="#a8a8a8">
        <circle cx="1044" cy="576" r="405.500" />
        <circle cx="1044" cy="171" r="30" />
        <circle cx="1450" cy="576" r="30" />
        <circle cx="638" cy="576" r="30" />
        <circle cx="1044" cy="982" r="30" />
      </g>

      {/* coordinate axes */}
      <circle cx="512" cy="945" r="4" stroke="#f00" strokeWidth="3" />
      <path d="M504 947l-16-1" stroke="#0f0" strokeWidth="4" />
      <path d="M477 946l13-5v11z" fill="#0d0" />
      <path d="M506 945v-18" stroke="#00f" strokeWidth="4" />
      <path d="M506 917l6 13h-12z" fill="#00f" />
      <path d="M502 944h8v7h-8z" fill="#d0d0d0" />
      <g textAnchor="middle" fontSize="16">
        <text x="506" y="917" fill="#1414c8">Z</text>
        <text x="471" y="951" fill="#0d0">Y</text>
        <text x="515" y="947" fill="#f00">X</text>
      </g>
    </svg>
  );
}

function ViewTools() {
  return (
    <div className="absolute top-0 right-0 flex h-[238px] w-8 flex-col items-center rounded-[3px] border border-[#5a5a5a] bg-[#4c4c4c] pt-[11px]">
      <button aria-label="动态观察">
        <svg width="26" height="24" viewBox="0 0 26 24" fill="#5d6873" stroke="#1f272f">
          <circle cx="13" cy="12" r="10" />
          <circle cx="20" cy="8" r="4" fill="#74808c" />
          <path d="M2 19q10-2 16-9M2 16l3 2-2 3-2-1z" fill="none" strokeWidth="2" />
        </svg>
      </button>
      <button aria-label="二维" className="mt-1.5 flex h-6 w-6 items-end justify-end border border-[#20262d] bg-[#464f5b] pr-px text-[9px] leading-3 text-[#181c20]">
        2D
      </button>
      <button aria-label="线框" className="mt-[5px]">
        <svg width="24" height="24" viewBox="0 0 24 24" fill="#66707b" stroke="#20262d">
          <path d="M.5 5.500l5-5h18v18l-5 5H.5zM.5 5.500h18v18M18.500 5.500l5-5" />
          <path d="M5.500 5.500h13v13h-13zM5.500.5v5M.5 23.500l5-5" fill="#515b66" />
        </svg>
      </button>
      <svg width="6" height="4" className="mt-[5px]">
        <path d="M0 0h6L3 4z" fill="#222" />
      </svg>
      <button aria-label="实体" className="mt-[5px]">
        <svg width="24" height="24" viewBox="0 0 24 24" fill="#46505c" stroke="#20262d">
          <path d="M.5 5.500l5-5h18v18l-5 5H.5zM.5 5.500h18v18M18.500 5.500l5-5" />
        </svg>
      </button>
      <svg width="6" height="4" className="mt-[5px]">
        <path d="M0 0h6L3 4z" fill="#222" />
      </svg>
      <button aria-label="旋转" className="mt-[5px]">
        <svg width="24" height="24" viewBox="0 0 24 24" fill="none" stroke="#20262d" strokeWidth="2">
          <path d="M20 17a10 10 0 1 1 0-10M22 2v6h-6" />
        </svg>
      </button>
      <svg width="6" height="4" className="mt-[5px]">
        <path d="M0 0h6L3 4z" fill="#222" />
      </svg>
      <div className="mt-[5px] h-px w-[22px] bg-[#222]" />
      <button aria-label="显示选项" className="mt-1.5">
        <svg width="24" height="24" viewBox="0 0 24 24" fill="#46505c" stroke="#20262d">
          <path d="M.5 4.500l3-4h17l3 4v19H.5zM.5 4.500h23M12.500 7v14" />
          <path d="M3 9.500h3v2H3zM3 13.500h3v2H3zM3 17.500h3v2H3zM14 9.500h3v2h-3zM14 13.500h3v2h-3zM14 17.500h3v2h-3zM8 10.500h2M8 14.500h2M8 18.500h2M19 10.500h2M19 14.500h2M19 18.500h2" />
        </svg>
      </button>
    </div>
  );
}

function ErrorDialog() {
  return (
    <div role="dialog" aria-label="错误" className="absolute top-[123px] left-0.5 flex h-[278px] w-[502px] flex-col border border-t-0 border-[#c5d3dc] bg-[#f0f0f0]">
      <div className="-mx-px flex h-[27px] shrink-0 items-center bg-[#2b80e3] pr-2.5 pl-2 text-white">
        错误 - 双击构件名称选择出错构件
        <button aria-label="最大化" className="mr-5 ml-auto">
          <svg width="8" height="7" viewBox="0 0 8 7" fill="none" stroke="#fff">
            <path d="M.5.500h7v6h-7zM0 1h8" />
          </svg>
        </button>
        <button aria-label="关闭">
          <svg width="8" height="8" viewBox="0 0 8 8" stroke="#fff" strokeWidth="2">
            <path d="M0 0l8 8M8 0L0 8" />
          </svg>
        </button>
      </div>
      <div className="mx-[11px] mt-[11px] mb-[11px] flex-1 border border-[#c3c3c3] bg-white">
        <table className="w-full table-fixed border-separate border-spacing-0 text-black">
          <colgroup>
            <col className="w-[52px]" />
            <col className="w-14" />
            <col className="w-14" />
            <col />
          </colgroup>
          <thead>
            <tr>
              {["类型", "构件名称", "所属楼层", "错误描述"].map((h) => (
                <th key={h} className="h-[25px] border-r border-b border-[#e2e2e2] bg-[#f0f0f0] p-0 pt-0.5 leading-4 font-normal whitespace-nowrap">
                  {h}
                </th>
              ))}
            </tr>
          </thead>
          <tbody>
            {[1, 2].map((n) => (
              <tr key={n}>
                <td className="h-5 p-0 pt-px leading-4">
                  <div className="flex items-center gap-1.5 pl-[3px] whitespace-nowrap">
                    <svg width="16" height="16" viewBox="0 0 16 16">
                      <circle cx="8" cy="8" r="8" fill="#f04747" />
                      <path d="M5 5l6 6M11 5l-6 6" stroke="#fff" strokeWidth="2" />
                    </svg>
                    错误
                  </div>
                </td>
                <td className="h-5 p-0 pt-px pl-[3px] leading-4">KL-1</td>
                <td className="h-5 p-0 pt-px pl-[3px] leading-4">首层</td>
                <td className="h-5 p-0 pt-px pl-[3px] leading-4">计算失败: 向下起拱不处理</td>
              </tr>
            ))}
          </tbody>
        </table>
      </div>
      <svg width="8" height="8" className="absolute right-[3px] bottom-[3px]">
        <path d="M6 0h2v2H6zM3 3h2v2H3zM6 3h2v2H6zM0 6h2v2H0zM3 6h2v2H3zM6 6h2v2H6z" fill="#777c84" />
      </svg>
    </div>
  );
}

function CollapseBox({ label }: { label: string }) {
  return (
    <button aria-label={`折叠${label}`} className="flex h-[14px] w-[14px] items-center justify-center rounded-[2px] border border-[#999] bg-[#f0f0f0]">
      <span className="h-px w-2 bg-[#111]" />
    </button>
  );
}

const cell = "h-[21px] border-r border-b border-[#c5c8ce] p-0 leading-4";

function DisplaySettings() {
  return (
    <aside className="flex w-[131px] shrink-0 flex-col border-l border-[#c5c8ce] bg-[#f0f0f0]">
      <div className="h-3 border-b border-[#c5c8ce] bg-[#d3d5db]" />
      <h2 className="h-[22px] border-b border-[#c5c8ce] pl-2 leading-[22px] text-[#555]">显示设置</h2>
      <div className="flex h-[30px] items-end gap-0.5 border-b border-[#c5c8ce] pl-0.5">
        <button className="-mb-px h-[26px] rounded-t-[3px] border border-b-0 border-[#c5c8ce] bg-white px-1.5 text-[#2b80e3]">图元显示</button>
        <button className="h-[23px] rounded-t-[3px] bg-[#e0e0e0] px-1.5 text-[#555]">楼层显示</button>
      </div>
      <table className="mt-[3px] ml-0.5 w-32 table-fixed border-separate border-spacing-0 border-t border-l border-[#c5c8ce] bg-white text-[#111]">
        <colgroup>
          <col className="w-[119px]" />
          <col />
        </colgroup>
        <thead>
          <tr>
            <th className={`${cell} bg-[#efefef] font-normal text-[#444]`}>图层构件</th>
            <th className={`${cell} bg-[#efefef]`} />
          </tr>
        </thead>
        <tbody>
          <tr>
            <td className={cell}>
              <div className="flex items-center gap-1.5 pl-px">
                <CollapseBox label="所有构件" />
                所有构件
              </div>
            </td>
            <td className={cell} />
          </tr>
          {layers.map((g) => (
            <React.Fragment key={g.name}>
              <tr>
                <td className={cell}>
                  <div className="flex h-5 items-center pl-2">
                    <span className="h-full w-px bg-[#c5c8ce]" />
                    <span className="h-px w-0.5 bg-[#c5c8ce]" />
                    <CollapseBox label={g.name} />
                    <span className="ml-1.5">{g.name}</span>
                  </div>
                </td>
                <td className={cell} />
              </tr>
              {g.items.map((item, i) => (
                <tr key={item}>
                  <td className={cell}>
                    <div className="flex h-5 items-center pl-2">
                      <span className="h-full w-px bg-[#c5c8ce]" />
                      <span className={`ml-[9px] w-px self-start bg-[#c5c8ce] ${i === g.items.length - 1 && !g.more ? "h-1/2" : "h-full"}`} />
                      <span className="h-px w-[17px] bg-[#c5c8ce]" />
                      <span className="ml-[5px] whitespace-nowrap">{item}</span>
                    </div>
                  </td>
                  <td className={cell} />
                </tr>
              ))}
            </React.Fragment>
          ))}
        </tbody>
      </table>
    </aside>
  );
}

export default function App() {
  return (
    <div className="relative flex h-screen flex-col overflow-hidden bg-white font-['Noto_Sans','Noto_Sans_CJK_SC',sans-serif] text-xs">
      <TitleBar />
      <TabBar />
      <Ribbon />
      <SelectBar />
      <main className="flex min-h-0 flex-1">
        <Sidebar />
        <div className="ml-1 flex w-[305px] shrink-0 flex-col">
          <ComponentList />
          <PropertyList />
        </div>
        <Splitter side="left" />
        <div className="relative min-w-0 flex-1 overflow-hidden bg-black">
          <Scene />
          <ViewTools />
          <ErrorDialog />
        </div>
        <Splitter side="right" />
        <DisplaySettings />
      </main>

      {/* application menu */}
      <button aria-label="应用菜单" className="absolute top-0 left-0 h-7 w-[30px] border-r border-[#d5d5d5] bg-white">
        <svg width="26" height="28" viewBox="0 0 26 28" className="block">
          <path d="M0 0h21v18q0 5-5 5H0z" fill="#1a86e0" />
          <path d="M0 0h21v8Q10 12 0 8z" fill="#45b4f5" />
          <path d="M0 3q8-3 16-1l-1 5-5-1 1 13q-4 2-7 0L5 6H0z" fill="#e4f4ff" />
          <path d="M25 23v4h-4z" fill="#666" />
        </svg>
      </button>
      <button aria-label="助手" className="absolute right-[-48px] bottom-[25px] h-[62px] w-[62px] rounded-full border border-[#3f4352] bg-[#555a6b] shadow-md">
        <span className="absolute top-[30px] left-3 h-0.5 w-2 bg-white" />
      </button>
    </div>
  );
}
